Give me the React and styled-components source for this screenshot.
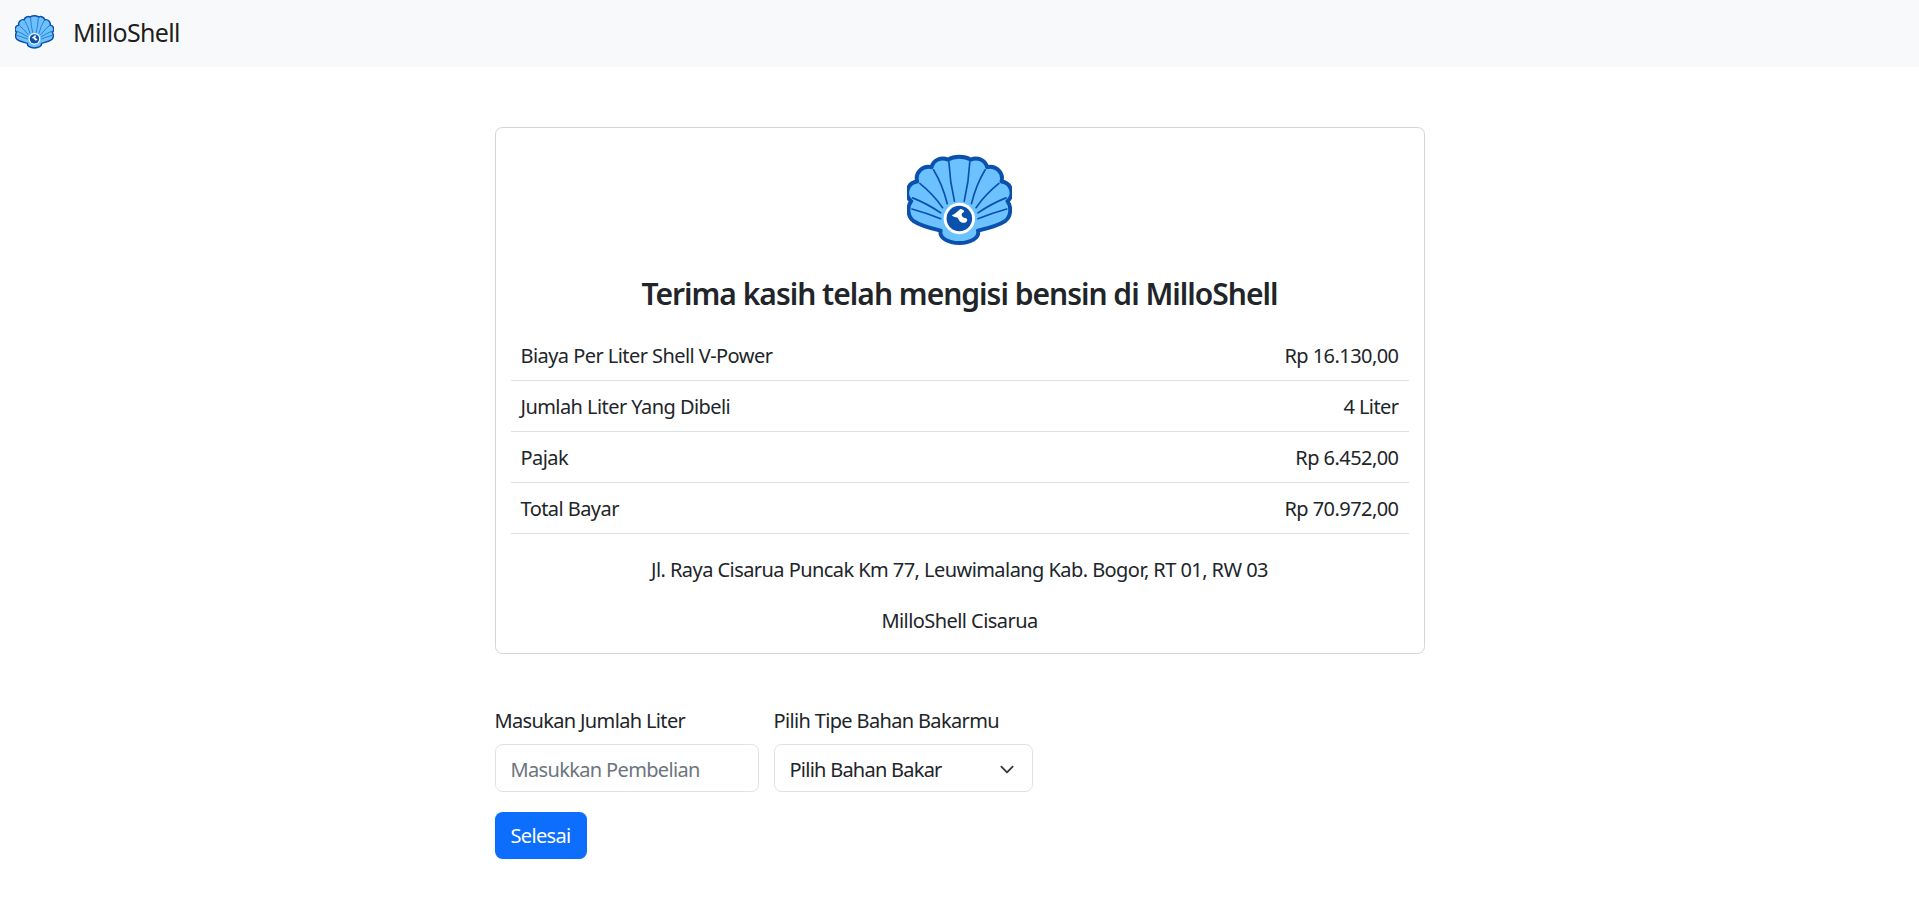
import React from "react";
import styled, { createGlobalStyle } from "styled-components";

const GlobalStyle = createGlobalStyle`
  html, body {
    margin: 0;
    padding: 0;
    background: #fff;
    color: #212529;
    font-family: "Noto Sans", "Open Sans", sans-serif;
    font-size: 20px;
    line-height: 30px;
  }
  * { box-sizing: border-box; }
`;

const Navbar = styled.nav`
  display: flex;
  align-items: center;
  height: 67px;
  padding: 0 0 3px 15px;
  background: #f8f9fa;
`;

const Brand = styled.a`
  display: flex;
  align-items: center;
  gap: 19px;
  font-size: 25px;
  color: rgba(0, 0, 0, 0.9);
  letter-spacing: -0.65px;
`;

const Main = styled.main`
  width: 930px;
  margin: 60px auto 0;
`;

const Card = styled.section`
  display: flex;
  flex-direction: column;
  align-items: center;
  padding: 26px 15px 0;
  border: 1px solid #d3d4d5;
  border-radius: 7.5px;
`;

const Title = styled.h3`
  margin: 30px 0 18px;
  font-size: 30px;
  line-height: 36px;
  font-weight: 600;
  letter-spacing: -1px;
  color: #212529;
`;

const Table = styled.div`
  width: 100%;
`;

const Row = styled.div`
  display: flex;
  justify-content: space-between;
  height: 51px;
  padding: 11px 10px 0;
  border-bottom: 1px solid #dee2e6;
  color: #212529;
  letter-spacing: -0.56px;
`;

const Note = styled.p`
  margin: 21px 0 0;
  letter-spacing: -0.56px;
  &:last-child { margin-bottom: 17px; }
`;

const Form = styled.form`
  margin-top: 50px;
`;

const Fields = styled.div`
  display: flex;
  gap: 15px;
`;

const Field = styled.label`
  display: flex;
  flex-direction: column;
  gap: 8px;
  width: ${(p) => p.$width}px;
  padding-top: 2px;
  letter-spacing: -0.65px;
`;

const controlStyles = `
  height: 47.5px;
  width: 100%;
  padding: 3px 15px 0;
  border: 1px solid #dee2e6;
  border-radius: 7.5px;
  background-color: #fff;
  font-family: inherit;
  font-size: 20px;
  letter-spacing: -0.65px;
  color: #212529;
`;

const Input = styled.input`
  ${controlStyles}
  &::placeholder { color: #6c757d; opacity: 1; }
`;

const Select = styled.select`
  ${controlStyles}
  appearance: none;
  letter-spacing: -0.75px;
  background-image: url("data:image/svg+xml,%3csvg xmlns='http://www.w3.org/2000/svg' viewBox='0 0 16 16'%3e%3cpath fill='none' stroke='%23343a40' stroke-linecap='round' stroke-linejoin='round' stroke-width='2' d='m2 5 6 6 6-6'/%3e%3c/svg%3e");
  background-repeat: no-repeat;
  background-position: right 15px top 17px;
  background-size: 20px 15px;
`;

const Button = styled.button`
  display: block;
  height: 47.5px;
  margin-top: 20px;
  padding: 0 16px;
  border: 0;
  border-radius: 7.5px;
  background: #0d6efd;
  color: #fff;
  font-family: inherit;
  font-size: 20px;
  letter-spacing: -0.65px;
`;

const ShellSvg = styled.svg`
  display: block;
  width: ${(p) => p.$width}px;
  height: ${(p) => p.$height}px;
`;

const ribs = [
  "M192 172 Q178 112 175 52",
  "M170 180 Q156 122 128 76",
  "M156 192 Q126 150 86 118",
  "M150 208 Q110 180 64 162",
  "M150 226 Q106 208 62 196",
  "M222 172 Q236 112 239 52",
  "M244 180 Q258 122 286 76",
  "M258 192 Q288 150 328 118",
  "M264 208 Q304 180 350 162",
  "M264 226 Q308 208 352 196",
];

const Shell = ({ width, height }) => (
  <ShellSvg $width={width} $height={height} viewBox="47 29 321 279">
    <path
      d="M150 262 C120 255 85 245 66 232 C50 220 46 190 60 172 A34 34 0 0 1 78 112 A36 36 0 0 1 122 68 A36 36 0 0 1 172 45 A50 30 0 0 1 242 45 A36 36 0 0 1 292 68 A36 36 0 0 1 336 112 A34 34 0 0 1 354 172 C368 190 364 220 348 232 C329 245 294 255 264 262 C270 285 240 300 207 300 C174 300 144 285 150 262 Z"
      fill="#6cc2ff"
      stroke="#0a50ad"
      strokeWidth="12"
      strokeLinejoin="round"
    />
    {ribs.map((d) => (
      <path key={d} d={d} stroke="#0a50ad" strokeWidth="5" strokeLinecap="round" fill="none" />
    ))}
    <circle cx="207" cy="225" r="48" fill="#fff" />
    <circle cx="207" cy="225" r="39" fill="#0a50ad" />
    <path d="M184 215 C194 212 200 205 210 196 C222 198 226 204 216 208 C212 214 214 222 228 224 C236 230 228 240 216 238 C206 236 206 226 200 222 C194 220 188 220 184 215 Z" fill="#fff" />
  </ShellSvg>
);

const rows = [
  ["Biaya Per Liter Shell V-Power", "Rp 16.130,00"],
  ["Jumlah Liter Yang Dibeli", "4 Liter"],
  ["Pajak", "Rp 6.452,00"],
  ["Total Bayar", "Rp 70.972,00"],
];

export default function App() {
  return (
    <>
      <GlobalStyle />
      <Navbar>
        <Brand>
          <Shell width={39} height={34} />
          MilloShell
        </Brand>
      </Navbar>
      <Main>
        <Card>
          <Shell width={105} height={92} />
          <Title>Terima kasih telah mengisi bensin di MilloShell</Title>
          <Table>
            {rows.map(([label, value]) => (
              <Row key={label}>
                <span>{label}</span>
                <span>{value}</span>
              </Row>
            ))}
          </Table>
          <Note>Jl. Raya Cisarua Puncak Km 77, Leuwimalang Kab. Bogor, RT 01, RW 03</Note>
          <Note>MilloShell Cisarua</Note>
        </Card>
        <Form>
          <Fields>
            <Field $width={264}>
              Masukan Jumlah Liter
              <Input placeholder="Masukkan Pembelian" />
            </Field>
            <Field $width={259}>
              Pilih Tipe Bahan Bakarmu
              <Select defaultValue="">
                <option value="">Pilih Bahan Bakar</option>
              </Select>
            </Field>
          </Fields>
          <Button type="button">Selesai</Button>
        </Form>
      </Main>
    </>
  );
}
